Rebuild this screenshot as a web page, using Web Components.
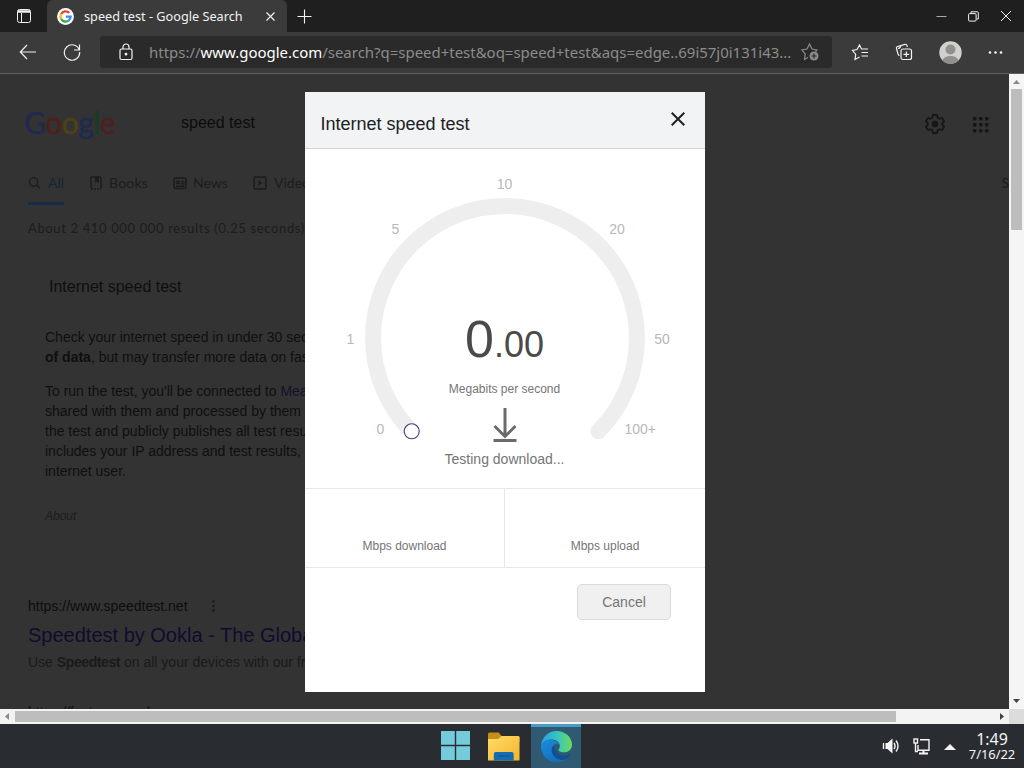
<!DOCTYPE html>
<html lang="en">
<head>
<meta charset="utf-8">
<title>speed test - Google Search</title>
<style>
  body {
    margin: 0;
    width: 1024px;
    height: 768px;
    overflow: hidden;
    display: flex;
    flex-direction: column;
    background: #333;
    font-family: "Liberation Sans", Arial, sans-serif;
  }
</style>
</head>
<body>
  <tab-strip>speed test - Google Search</tab-strip>
  <address-bar><span slot="scheme">https://</span><span slot="host">www.google.com</span>/search?q=speed+test&amp;oq=speed+test&amp;aqs=edge..69i57j0i131i43...</address-bar>
  <page-view>
    <search-header>speed test</search-header>
    <search-tabs></search-tabs>
    <speed-card></speed-card>
    <search-result url="https://www.speedtest.net" heading="Speedtest by Ookla - The Global Broadband">
      Use <b>Speedtest</b> on all your devices with our free
    </search-result>
    <search-result url="https://fast.com"></search-result>
    <speed-dialog slot="overlay" heading="Internet speed test">
      <speed-gauge></speed-gauge>
    </speed-dialog>
  </page-view>
  <task-bar></task-bar>

<script>
class TabStrip extends HTMLElement {
  constructor() {
    super();
    this.attachShadow({ mode: "open" }).innerHTML = `
      <style>
        :host {
          display: flex;
          flex: none;
          height: 32px;
          background: #1f1f1f;
          color: #f2f2f2;
          font-family: "Noto Sans", sans-serif;
        }
        svg { display: block; fill: none; stroke: currentColor; }
        .menu { width: 47px; display: grid; place-items: center; }
        .tab {
          display: flex;
          align-items: center;
          box-sizing: border-box;
          width: 240px;
          padding: 0 10px 0 10px;
          border-radius: 6px 6px 0 0;
          background: #3b3b3b;
          font-size: 12.700px;
          white-space: nowrap;
        }
        .title { flex: 1; padding-left: 10px; line-height: 18px; }
        .new { width: 35px; display: grid; place-items: center; }
        .window { margin-left: auto; display: flex; align-items: center; gap: 21px; padding-right: 12px; }
      </style>
      <div class="menu">
        <svg width="16" height="16" viewBox="0 0 16 16"><rect x="1.500" y="1.500" width="13" height="13" rx="2"/><path d="M5.500 5v9"/><path d="M2 3.500h12" stroke-width="2.500"/></svg>
      </div>
      <div class="tab">
        <svg width="17" height="17" viewBox="0 0 17 17">
          <circle cx="8.500" cy="8.500" r="8.400" fill="#fff" stroke="none"/>
          <g stroke-width="2.300">
            <path d="M12.200 4.900A5.100 5.100 0 0 0 4.100 6" stroke="#ea4335"/>
            <path d="M4.100 6A5.100 5.100 0 0 0 4.100 11" stroke="#fbbc05"/>
            <path d="M4.100 11A5.100 5.100 0 0 0 11.800 12.400" stroke="#34a853"/>
            <path d="M11.800 12.400A5.100 5.100 0 0 0 13.600 8.700H8.800" stroke="#4285f4"/>
          </g>
        </svg>
        <span class="title"><slot></slot></span>
        <svg width="13" height="13" viewBox="0 0 13 13" stroke-width="1.200"><path d="M2.500 2.500l8 8M10.500 2.500l-8 8"/></svg>
      </div>
      <div class="new"><svg width="15" height="15" viewBox="0 0 15 15"><path d="M7.500 .5v14M.5 7.500h14" stroke-width="1.100"/></svg></div>
      <div class="window">
        <svg width="11" height="11" viewBox="0 0 11 11"><path d="M.5 5.500h10" stroke="#aaa"/></svg>
        <svg width="11" height="11" viewBox="0 0 11 11"><rect x=".6" y="2.600" width="7.500" height="7.500" rx="1"/><path d="M3 2.500V.8h6.500q.8 0 .8 .8V8H8.500"/></svg>
        <svg width="12" height="12" viewBox="0 0 12 12"><path d="M1 1l10 10M11 1L1 11"/></svg>
      </div>
    `;
  }
}

class AddressBar extends HTMLElement {
  constructor() {
    super();
    this.attachShadow({ mode: "open" }).innerHTML = `
      <style>
        :host {
          display: flex;
          flex: none;
          align-items: center;
          box-sizing: border-box;
          height: 42px;
          padding-bottom: 1px;
          border-bottom: 1px solid #606060;
          background: #3b3b3b;
          color: #f2f2f2;
          font-family: "Noto Sans", sans-serif;
        }
        svg { display: block; flex: none; fill: none; stroke: currentColor; stroke-width: 1.200; }
        .nav { display: flex; align-items: center; gap: 26px; width: 81px; padding-left: 19px; }
        .field {
          display: flex;
          align-items: center;
          box-sizing: border-box;
          width: 732px;
          height: 32px;
          padding: 0 13px 0 19px;
          border-radius: 3px;
          background: #2a2a2a;
          color: #8c8c8c;
        }
        .url { flex: 1; padding-left: 16px; font-size: 14.960px; line-height: 22px; white-space: nowrap; }
        ::slotted([slot="host"]) { color: #fff; }
        .tools { display: flex; align-items: center; flex: 1; justify-content: space-between; padding: 0 21px 0 19px; }
      </style>
      <div class="nav">
        <svg width="18" height="18" viewBox="0 0 18 18"><path d="M17 9H1.500M8 2L1.300 9L8 16"/></svg>
        <svg width="18" height="18" viewBox="0 0 18 18"><path d="M16.300 7A7.700 7.700 0 1 0 16.700 9M16.500 1.500V7H11"/></svg>
      </div>
      <div class="field">
        <svg width="14" height="18" viewBox="0 0 14 18" color="#f2f2f2"><rect x="1" y="6" width="12" height="10.500" rx="1.500"/><path d="M4 6V4a3 3 0 0 1 6 0V6"/><circle cx="7" cy="11.200" r=".8" fill="currentColor"/></svg>
        <span class="url"><slot name="scheme"></slot><slot name="host"></slot><slot></slot></span>
        <svg width="18" height="18" viewBox="0 0 18 18"><path d="M7 14.500L3.600 16.500L4.200 11L1 7L6 6L8.500 1L11 6L16 7L14.500 8.500"/><circle cx="13" cy="13" r="4.500" fill="currentColor" stroke="none"/><path d="M13 10.500v5M10.500 13h5" stroke="#2a2a2a"/></svg>
      </div>
      <div class="tools">
        <svg width="18" height="18" viewBox="0 0 18 18"><path d="M8.500 14L4 16.500L4.700 11.500L1.500 7.500L6 6.500L8.500 2L10.500 6H17M10.500 9.500H17M10.500 13H17"/></svg>
        <svg width="18" height="18" viewBox="0 0 18 18"><rect x="6" y="6" width="10.500" height="10.500" rx="2"/><path d="M11.300 8.500v5.600M8.500 11.300h5.600"/><path d="M4.500 12.500Q3.500 12.500 3 11L1.500 5.500Q1 4 2.500 3.500L10 1.300Q11.500 1 12 2.500L12.400 4M3 5.500Q5 5.500 6 2.500"/></svg>
        <svg width="23" height="23" viewBox="0 0 23 23"><clipPath id="c"><circle cx="11.500" cy="11.500" r="11.200"/></clipPath><g clip-path="url(#c)" stroke="none"><rect width="23" height="23" fill="#d3d1cd"/><circle cx="11.500" cy="8.500" r="5" fill="#92908d"/><ellipse cx="11.500" cy="20" rx="8" ry="5" fill="#92908d"/></g></svg>
        <svg width="15" height="5" viewBox="0 0 15 5"><g fill="currentColor" stroke="none"><circle cx="2" cy="2.500" r="1.300"/><circle cx="7.500" cy="2.500" r="1.300"/><circle cx="13" cy="2.500" r="1.300"/></g></svg>
      </div>
    `;
  }
}

class PageView extends HTMLElement {
  constructor() {
    super();
    this.attachShadow({ mode: "open" }).innerHTML = `
      <style>
        :host {
          display: grid;
          flex: none;
          grid-template: 635px 15px / 1009px 15px;
          position: relative;
          background: #333;
        }
        .page { overflow: hidden; }
        .side, .bottom { display: flex; background: #f5f5f5; }
        .side { flex-direction: column; align-items: center; }
        .side .thumb { width: 11px; height: 141px; background: #bdbdbd; }
        .bottom { align-items: center; background: #f3f3f3; }
        .bottom .thumb { width: 881px; height: 11px; background: #bdbdbd; }
        .corner { background: #dcdcdc; }
        .arrow { flex: none; width: 15px; height: 15px; }
        .last { margin-left: auto; }
        .side .last { margin: auto 0 0; }
        ::slotted([slot="overlay"]) { position: absolute; left: 305px; top: 18px; }
      </style>
      <div class="page"><slot></slot></div>
      <div class="side">
        <svg class="arrow" viewBox="0 0 15 15"><path d="M4 10h7L7.500 6z" fill="#8a8a8a"/></svg>
        <div class="thumb"></div>
        <svg class="arrow last" viewBox="0 0 15 15"><path d="M4 5h7L7.500 9z" fill="#444"/></svg>
      </div>
      <div class="bottom">
        <svg class="arrow" viewBox="0 0 15 15"><path d="M9 4v7L5 7.500z" fill="#8a8a8a"/></svg>
        <div class="thumb"></div>
        <svg class="arrow last" viewBox="0 0 15 15"><path d="M6 4v7L10 7.500z" fill="#444"/></svg>
      </div>
      <div class="corner"></div>
      <slot name="overlay"></slot>
    `;
  }
}

class SearchHeader extends HTMLElement {
  constructor() {
    super();
    const dots = [1, 7, 13].map((y) => [1, 7, 13].map((x) => `<rect x="${x}" y="${y}" width="3.500" height="3.500" rx="1"/>`).join("")).join("");
    this.attachShadow({ mode: "open" }).innerHTML = `
      <style>
        :host { display: flex; align-items: center; height: 100px; padding: 0 20px 0 24px; box-sizing: border-box; color: #0c0c0c; }
        .logo {
          width: 147px;
          padding-bottom: 4px;
          font: 30px/40px Lato, sans-serif;
          letter-spacing: -.5px;
          -webkit-text-stroke: .6px currentColor;
        }
        .b { color: #20294e; } .r { color: #4f1f1e; } .y { color: #4d4216; } .g { color: #193c26; }
        .query { flex: 1; padding: 0 0 2px 10px; font-size: 16px; }
        svg { display: block; }
        .gear { margin-right: 27px; }
      </style>
      <div class="logo"><span class="b">G</span><span class="r">o</span><span class="y">o</span><span class="b">g</span><span class="g">l</span><span class="r">e</span></div>
      <div class="query"><slot></slot></div>
      <svg class="gear" width="20" height="20" viewBox="0 0 20 20" fill="none" stroke="#161616" stroke-width="1.900" stroke-linejoin="round"><path d="M8 1h4l.6 2.600 2 1.100 2.500-.8 2 3.500-1.900 1.800v1.600l1.900 1.800-2 3.500-2.500-.8-2 1.100L12 19H8l-.6-2.600-2-1.100-2.500.8-2-3.500 1.900-1.800V9.200L.9 7.400l2-3.500 2.500.8 2-1.100z"/><circle cx="10" cy="10" r="2.400" fill="#161616"/></svg>
      <svg width="17" height="17" viewBox="0 0 17 17" fill="#161616">${dots}</svg>
    `;
  }
}

class SearchTabs extends HTMLElement {
  constructor() {
    super();
    this.attachShadow({ mode: "open" }).innerHTML = `
      <style>
        :host { display: block; color: #1c1c1c; font-family: Lato, sans-serif; }
        nav { display: flex; height: 31px; margin-left: 28px; font-size: 14px; line-height: 18px; }
        span { display: flex; align-items: center; gap: 7px; box-sizing: border-box; height: 31px; padding-bottom: 13px; white-space: nowrap; }
        svg { display: block; fill: none; stroke: currentColor; stroke-width: 1.500; }
        .all { width: 36px; color: #152335; border-bottom: 3px solid #172c46; padding-bottom: 10px; }
        .all svg { color: #1c1c1c; }
        .books { margin-left: 26px; width: 83px; letter-spacing: .2px; }
        .news { width: 80px; gap: 6px; }
        .settings { margin-left: auto; }
        p { margin: 14px 0 0 28px; font-size: 13px; line-height: 18px; letter-spacing: .640px; white-space: nowrap; }
      </style>
      <nav>
        <span class="all"><svg width="14" height="14" viewBox="0 0 14 14"><circle cx="6" cy="6" r="4.500"/><path d="M9.500 9.500L13 13"/></svg>All</span>
        <span class="books"><svg width="12" height="14" viewBox="0 0 12 14"><path d="M1 12V2.500Q1 1 2.500 1h7Q11 1 11 2.500V12"/><path d="M1 13h10" stroke-dasharray="2 1"/><path d="M5 1v6l2-1.500L9 7V1" fill="currentColor" stroke="none"/></svg>Books</span>
        <span class="news"><svg width="14" height="14" viewBox="0 0 14 14"><rect x="1" y="2" width="12" height="10.500" rx="1.500"/><path d="M3 5.500h3v2H3M8 5.500h3.500M8 7.800h3.500M3 10.300h8.500"/></svg>News</span>
        <span><svg width="14" height="14" viewBox="0 0 14 14"><rect x="1" y="1" width="12" height="12" rx="1.500"/><path d="M5.500 4.500v5L9.500 7z" fill="currentColor" stroke="none"/></svg>Videos</span>
        <span class="settings">S</span>
      </nav>
      <p>About 2 410 000 000 results (0.25 seconds)</p>
    `;
  }
}

class SpeedCard extends HTMLElement {
  constructor() {
    super();
    this.attachShadow({ mode: "open" }).innerHTML = `
      <style>
        :host { display: block; width: 600px; height: 361px; padding: 40px 0 0 45px; box-sizing: border-box; color: #0f0f0f; }
        h2 { margin: 0 0 30px 4px; font-size: 16px; font-weight: 400; line-height: 20px; }
        p { margin: 0 0 14px; font-size: 14px; line-height: 20px; white-space: nowrap; }
        a { color: #12122c; }
        .about { margin: 25px 0 0; font-size: 12px; font-style: italic; color: #1c1c1c; }
      </style>
      <h2>Internet speed test</h2>
      <p>Check your internet speed in under 30 seconds.<br><b>of data</b>, but may transfer more data on fast</p>
      <p>To run the test, you'll be connected to <a>Measurement Lab</a><br>shared with them and processed by them in<br>the test and publicly publishes all test results.<br>includes your IP address and test results,<br>internet user.</p>
      <p class="about">About</p>
    `;
  }
}

class SearchResult extends HTMLElement {
  constructor() {
    super();
    const url = this.getAttribute("url");
    const heading = this.getAttribute("heading") || "";
    this.attachShadow({ mode: "open" }).innerHTML = `
      <style>
        :host { display: block; height: 106px; padding-left: 28px; font-size: 14px; white-space: nowrap; color: #1a1a1a; }
        .url { display: flex; align-items: center; gap: 24px; height: 16px; color: #0d0d0d; }
        h3 { margin: 8px 0 6px; font-size: 20px; font-weight: 400; line-height: 26px; color: #0f0c30; }
        p { margin: 0; line-height: 16px; }
        ::slotted(b) { letter-spacing: -.4px; }
      </style>
      <div class="url">${url}<svg width="3" height="12" viewBox="0 0 3 12" fill="#1a1a1a"><circle cx="1.500" cy="1.500" r="1.300"/><circle cx="1.500" cy="6" r="1.300"/><circle cx="1.500" cy="10.500" r="1.300"/></svg></div>
      <h3>${heading}</h3>
      <p><slot></slot></p>
    `;
  }
}

class SpeedGauge extends HTMLElement {
  constructor() {
    super();
    const marks = [["0", 75.500, 280], ["1", 45.500, 190], ["5", 90.500, 80], ["10", 199.500, 35], ["20", 312, 80], ["50", 357, 190], ["100+", 335.300, 280]];
    const labels = marks.map(([text, x, y]) => `<text x="${x}" y="${y + 5}">${text}</text>`).join("");
    this.attachShadow({ mode: "open" }).innerHTML = `
      <style>
        :host { display: grid; height: 339px; color: #757575; }
        svg, .readout { grid-area: 1 / 1; }
        text { font-size: 14px; fill: #b8b8b8; text-anchor: middle; }
        .readout { display: flex; flex-direction: column; align-items: center; padding-top: 160px; width: 399px; }
        .value { font-size: 36px; line-height: 60px; color: #4a4a4a; }
        .value b { font-size: 52px; font-weight: 400; }
        .unit { margin-top: 6px; font-size: 12px; line-height: 16px; }
        .status { margin-top: 8px; font-size: 14px; line-height: 18px; }
        .readout svg { margin: 11px 0 0 1px; }
      </style>
      <svg width="400" height="339" viewBox="0 0 400 339">
        <path d="M106.700 282.300A132 132 0 1 1 293.300 282.300" fill="none" stroke="#eee" stroke-width="16" stroke-linecap="round"/>
        <circle cx="106.700" cy="282.300" r="7.500" fill="#fff" stroke="#43407c" stroke-width="1.100"/>
        ${labels}
      </svg>
      <div class="readout">
        <div class="value"><b>0</b>.00</div>
        <div class="unit">Megabits per second</div>
        <svg width="24" height="34" viewBox="0 0 24 34" fill="none" stroke="#6b6b6b" stroke-width="3"><path d="M12 0v28M1.500 18L12 28.500L22.500 18M.5 32.500h23"/></svg>
        <div class="status">Testing download...</div>
      </div>
    `;
  }
}

class SpeedDialog extends HTMLElement {
  constructor() {
    super();
    this.attachShadow({ mode: "open" }).innerHTML = `
      <style>
        :host { display: flex; flex-direction: column; width: 400px; height: 600px; background: #fff; color: #757575; }
        header {
          display: flex;
          justify-content: space-between;
          align-items: center;
          box-sizing: border-box;
          height: 57px;
          padding: 0 20px 0 15.500px;
          border-bottom: 1px solid #d2d4d6;
          background: #f1f3f4;
          color: #202124;
          font-size: 18px;
        }
        header span { padding-top: 8px; }
        header svg { padding-bottom: 2px; }
        .totals { display: grid; grid-template-columns: 200px 200px; box-sizing: border-box; height: 80px; border: solid #e8e8e8; border-width: 1px 0; }
        .totals div { display: flex; justify-content: center; align-items: flex-end; box-sizing: border-box; padding-bottom: 13px; font-size: 12px; line-height: 16px; }
        .totals div:first-child { border-right: 1px solid #e8e8e8; }
        footer { display: flex; justify-content: flex-end; padding: 16px 34px 0 0; }
        button {
          width: 94px;
          height: 36px;
          padding: 0;
          border: 1px solid #d9d9d9;
          border-radius: 5px;
          background: #f0f0f0;
          color: #757575;
          font: 14px "Liberation Sans", Arial, sans-serif;
        }
      </style>
      <header>
        <span>${this.getAttribute("heading")}</span>
        <svg width="14" height="14" viewBox="0 0 14 14" stroke="#202124" stroke-width="2"><path d="M.7 .7l12.600 12.600M13.300 .7L.7 13.300"/></svg>
      </header>
      <slot></slot>
      <div class="totals"><div>Mbps download</div><div>Mbps upload</div></div>
      <footer><button>Cancel</button></footer>
    `;
  }
}

class TaskBar extends HTMLElement {
  constructor() {
    super();
    this.attachShadow({ mode: "open" }).innerHTML = `
      <style>
        :host {
          display: grid;
          grid-template-columns: 441px 140px 1fr;
          flex: 1;
          background: #292d32;
          color: #f5f5f5;
          font-family: "Noto Sans", sans-serif;
        }
        svg { display: block; }
        .apps { grid-column: 2; display: flex; align-items: center; }
        .start { margin-bottom: 1px; }
        .folder { margin: 0 11px 0 18px; }
        .edge {
          display: grid;
          place-items: center;
          box-sizing: border-box;
          width: 50px;
          height: 44px;
          padding-bottom: 3px;
          border-top: 3px solid #4b9bc7;
          background: #305a72;
        }
        .tray { display: flex; align-items: center; justify-content: flex-end; padding-right: 8px; }
        .tray svg { fill: none; stroke: currentColor; stroke-width: 1.400; }
        .net { margin: 0 14px 0 13px; }
        .clock { width: 48px; margin-left: 12px; display: flex; flex-direction: column; align-items: center; font-size: 12.900px; line-height: 14px; }
        .clock b { font-size: 16px; font-weight: 400; line-height: 15px; }
      </style>
      <div class="apps">
        <svg class="start" width="29" height="29" viewBox="0 0 29 29" fill="#74cbd9"><path d="M0 0h13.800v13.800H0zM15.200 0H29v13.800H15.200zM0 15.200h13.800V29H0zM15.200 15.200H29V29H15.200z"/></svg>
        <svg class="folder" width="32" height="29" viewBox="0 0 33 29" preserveAspectRatio="none">
          <linearGradient id="f" x2="1" y2="1"><stop stop-color="#ffdc68"/><stop offset="1" stop-color="#f3b52c"/></linearGradient>
          <path d="M0 2q0-1.500 1.500-1.500H11l3 3.500h17q1.500 0 1.500 1.500V10H0z" fill="#c98d1b"/>
          <path d="M0 7h10.500L14 4h17q1.500 0 1.500 1.500V28.500H0z" fill="url(#f)"/>
          <path d="M6 28.500V22q0-2 2-2h16.500q2 0 2 2v6.500z" fill="#176bb0"/><path d="M10.500 24h11.500" stroke="#0c4f8b"/>
        </svg>
        <div class="edge">
          <svg width="33" height="33" viewBox="0 0 34 34">
            <linearGradient id="e1"><stop stop-color="#2a9fe0"/><stop offset=".5" stop-color="#35c2c6"/><stop offset="1" stop-color="#6bdc5a"/></linearGradient>
            <linearGradient id="e2" x2="1" y2="1"><stop stop-color="#1a8fdc"/><stop offset="1" stop-color="#1263b0"/></linearGradient>
            <path d="M1 16C2 7 9 1 17 1c9 0 16 6.500 16 14 0 5-3.500 8-8 8-4 0-6-1.500-6-2.500 0-1 1.500-1.500 1.500-4C20.500 12 15 9 10 10 5 11 2 14 1 16z" fill="url(#e1)"/>
            <path d="M1 16c2-5 6-7 11-6 4 .5 7.500 3 8.300 5-2-1.500-4.500-1-6 .5-4 4-1 12 6 14 3 .8 7 .5 10-1.500C27 31.500 22 33 17 33 8 33 .5 25.500 1 16z" fill="url(#e2)"/>
            <path d="M14.300 15.500C10 19.500 12 27 18.300 30c5 2 10 .5 13-3.500 1-1.500-.3-2-1.300-1.500-4 2-9 1.500-12-1.500-2.500-2.500-2.700-5.500-3.700-8z" fill="#164f91"/>
          </svg>
        </div>
      </div>
      <div class="tray">
        <svg width="18" height="16" viewBox="0 0 18 16"><path d="M1.500 5v6"/><path d="M3.500 5h2l5-4.500v15l-5-4.500h-2z" fill="currentColor" stroke="none"/><path d="M12 5q2 3 0 6M14 2.500q4 5.500 0 11"/></svg>
        <svg class="net" width="17" height="17" viewBox="0 0 17 17"><rect x="1" y="1" width="3.500" height="4"/><path d="M2.500 5v8.500H5M7 1.700h9V12.300H5V7"/><path d="M6 15.500h9M10.500 13v2" stroke-width="2"/></svg>
        <svg width="12" height="7" viewBox="0 0 12 7"><path d="M0 7h12L6 1z" fill="currentColor" stroke="none"/></svg>
        <div class="clock"><b>1:49</b>7/16/22</div>
      </div>
    `;
  }
}

customElements.define("tab-strip", TabStrip);
customElements.define("address-bar", AddressBar);
customElements.define("page-view", PageView);
customElements.define("search-header", SearchHeader);
customElements.define("search-tabs", SearchTabs);
customElements.define("speed-card", SpeedCard);
customElements.define("search-result", SearchResult);
customElements.define("speed-gauge", SpeedGauge);
customElements.define("speed-dialog", SpeedDialog);
customElements.define("task-bar", TaskBar);
</script>
</body>
</html>
